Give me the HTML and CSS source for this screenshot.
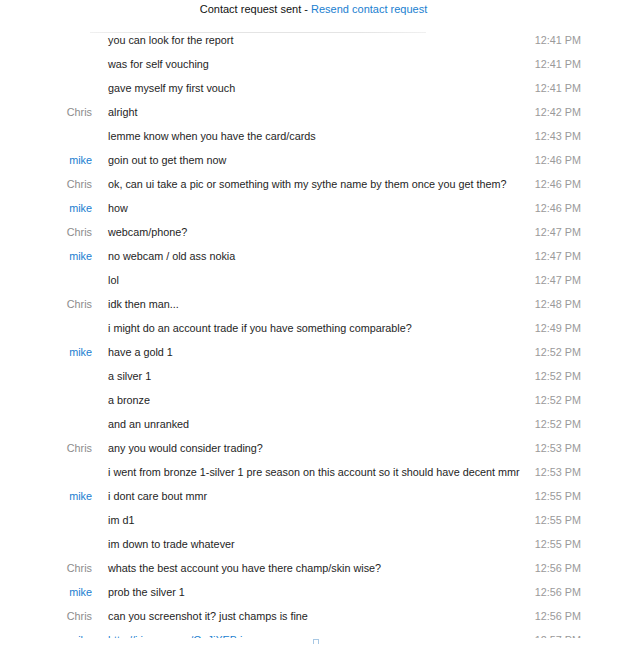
FILE: index.html
```html
<!DOCTYPE html>
<html>
<head>
<meta charset="utf-8">
<link rel="stylesheet" href="styles.css">
</head>
<body>
<div class="header">Contact request sent - <a class="link" href="#">Resend contact request</a></div>
<div class="chat">
  <div class="row"><span class="name"></span><span class="msg">you can look for the report</span><span class="time">12:41 PM</span></div>
  <div class="row"><span class="name"></span><span class="msg">was for self vouching</span><span class="time">12:41 PM</span></div>
  <div class="row"><span class="name"></span><span class="msg">gave myself my first vouch</span><span class="time">12:41 PM</span></div>
  <div class="row"><span class="name chris">Chris</span><span class="msg">alright</span><span class="time">12:42 PM</span></div>
  <div class="row"><span class="name"></span><span class="msg">lemme know when you have the card/cards</span><span class="time">12:43 PM</span></div>
  <div class="row"><span class="name mike">mike</span><span class="msg">goin out to get them now</span><span class="time">12:46 PM</span></div>
  <div class="row"><span class="name chris">Chris</span><span class="msg">ok, can ui take a pic or something with my sythe name by them once you get them?</span><span class="time">12:46 PM</span></div>
  <div class="row"><span class="name mike">mike</span><span class="msg">how</span><span class="time">12:46 PM</span></div>
  <div class="row"><span class="name chris">Chris</span><span class="msg">webcam/phone?</span><span class="time">12:47 PM</span></div>
  <div class="row"><span class="name mike">mike</span><span class="msg">no webcam / old ass nokia</span><span class="time">12:47 PM</span></div>
  <div class="row"><span class="name"></span><span class="msg">lol</span><span class="time">12:47 PM</span></div>
  <div class="row"><span class="name chris">Chris</span><span class="msg">idk then man...</span><span class="time">12:48 PM</span></div>
  <div class="row"><span class="name"></span><span class="msg">i might do an account trade if you have something comparable?</span><span class="time">12:49 PM</span></div>
  <div class="row"><span class="name mike">mike</span><span class="msg">have a gold 1</span><span class="time">12:52 PM</span></div>
  <div class="row"><span class="name"></span><span class="msg">a silver 1</span><span class="time">12:52 PM</span></div>
  <div class="row"><span class="name"></span><span class="msg">a bronze</span><span class="time">12:52 PM</span></div>
  <div class="row"><span class="name"></span><span class="msg">and an unranked</span><span class="time">12:52 PM</span></div>
  <div class="row"><span class="name chris">Chris</span><span class="msg">any you would consider trading?</span><span class="time">12:53 PM</span></div>
  <div class="row"><span class="name"></span><span class="msg">i went from bronze 1-silver 1 pre season on this account so it should have decent mmr</span><span class="time">12:53 PM</span></div>
  <div class="row"><span class="name mike">mike</span><span class="msg">i dont care bout mmr</span><span class="time">12:55 PM</span></div>
  <div class="row"><span class="name"></span><span class="msg">im d1</span><span class="time">12:55 PM</span></div>
  <div class="row"><span class="name"></span><span class="msg">im down to trade whatever</span><span class="time">12:55 PM</span></div>
  <div class="row"><span class="name chris">Chris</span><span class="msg">whats the best account you have there champ/skin wise?</span><span class="time">12:56 PM</span></div>
  <div class="row"><span class="name mike">mike</span><span class="msg">prob the silver 1</span><span class="time">12:56 PM</span></div>
  <div class="row"><span class="name chris">Chris</span><span class="msg">can you screenshot it? just champs is fine</span><span class="time">12:56 PM</span></div>
  <div class="row"><span class="name mike">mike</span><span class="msg"><a class="link" href="#">http://i.imgur.com/GeJiXEB.jpg</a></span><span class="time">12:57 PM</span></div>
</div>
<div class="footer"><span class="grip"></span></div>
</body>
</html>
```
FILE: styles.css
```css
html, body {
  margin: 0;
  padding: 0;
  background: #fff;
}
body {
  font-family: "Liberation Sans", Arial, sans-serif;
  font-size: 10.8px;
  color: #1e1e1e;
  width: 617px;
  height: 645px;
  overflow: hidden;
}
.link {
  color: #1a80d0;
  text-decoration: none;
}
.header {
  height: 18px;
  line-height: 18px;
  font-size: 11px;
  text-align: center;
  padding-left: 10px;
  color: #111;
}
.chat {
  position: relative;
  margin-top: 10px;
  height: 610px;
  overflow: hidden;
}
.chat::before {
  content: "";
  position: absolute;
  top: 4px;
  left: 90px;
  width: 336px;
  height: 1px;
  background: linear-gradient(to right, rgba(225,225,225,0.5), #e4e4e4 20%, #e4e4e4 80%, rgba(225,225,225,0.5));
}
.row {
  display: grid;
  grid-template-columns: 92px minmax(0, 1fr) 70px;
  column-gap: 16px;
  height: 24px;
  line-height: 24px;
  padding-right: 36px;
  white-space: nowrap;
}
.name {
  text-align: right;
}
.chris { color: #8c8c8c; }
.mike { color: #1a80d0; }
.time {
  color: #9a9a9a;
  text-align: right;
}
.footer {
  display: flex;
  justify-content: center;
  padding-left: 14px;
}
.grip {
  width: 4px;
  height: 4px;
  margin-top: 1px;
  border: 1px solid #a8c8e4;
  border-bottom: none;
}
```
